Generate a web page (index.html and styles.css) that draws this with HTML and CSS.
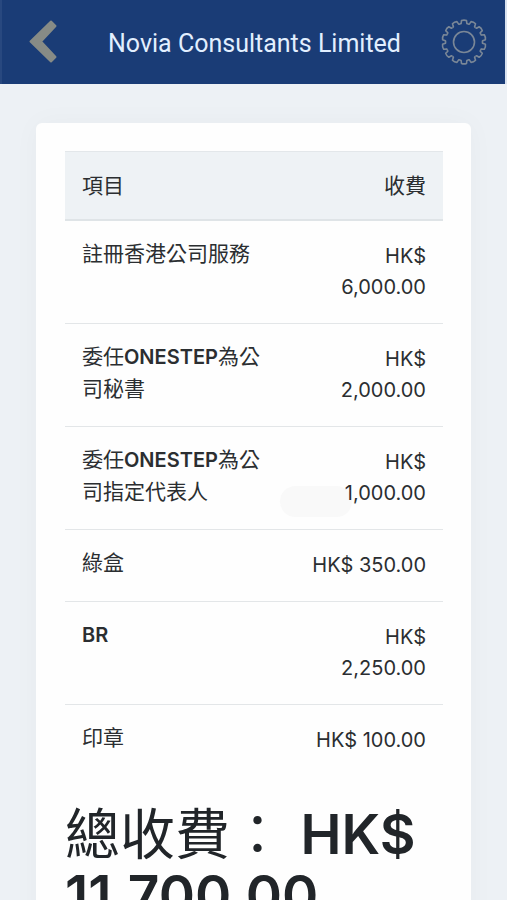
FILE: index.html
```html
<!DOCTYPE html>
<html lang="zh-Hant">
<head>
  <meta charset="utf-8">
  <meta name="viewport" content="width=device-width, initial-scale=1">
  <title>Novia Consultants Limited</title>
  <link rel="stylesheet" href="styles.css">
</head>
<body>
  <header class="topbar">
    <button class="icon-button" type="button" aria-label="返回">
      <svg width="46" height="46" viewBox="0 0 46 46" fill="#878b86" stroke="#878b86" stroke-width="2" stroke-linejoin="round">
        <path d="M8.500 22.500 L29 2.500 L33.500 7 L19 22.500 L33.500 38 L29 42.500 Z"/>
      </svg>
    </button>
    <h1 class="topbar-title">Novia Consultants Limited</h1>
    <button class="icon-button" type="button" aria-label="設定">
      <svg width="46" height="46" viewBox="-23 -23 46 46" fill="none" stroke="#7a8797" stroke-width="1.600" stroke-linejoin="round">
        <defs>
          <path id="tooth" d="M-4.100 -17.900 L-2.900 -18.400 L-2.500 -21.400 Q0 -22.400 2.500 -21.400 L2.900 -18.400 L4.100 -17.900"/>
        </defs>
        <use href="#tooth"/>
        <use href="#tooth" transform="rotate(25.714)"/>
        <use href="#tooth" transform="rotate(51.429)"/>
        <use href="#tooth" transform="rotate(77.143)"/>
        <use href="#tooth" transform="rotate(102.857)"/>
        <use href="#tooth" transform="rotate(128.571)"/>
        <use href="#tooth" transform="rotate(154.286)"/>
        <use href="#tooth" transform="rotate(180)"/>
        <use href="#tooth" transform="rotate(205.714)"/>
        <use href="#tooth" transform="rotate(231.429)"/>
        <use href="#tooth" transform="rotate(257.143)"/>
        <use href="#tooth" transform="rotate(282.857)"/>
        <use href="#tooth" transform="rotate(308.571)"/>
        <use href="#tooth" transform="rotate(334.286)"/>
        <circle r="10.500"/>
      </svg>
    </button>
  </header>
  <main class="page">
    <section class="card">
      <table class="fees">
        <thead>
          <tr><th class="item" scope="col">項目</th><th class="price" scope="col">收費</th></tr>
        </thead>
        <tbody>
          <tr><td class="item">註冊香港公司服務</td><td class="price">HK$ 6,000.00</td></tr>
          <tr><td class="item">委任<b>ONESTEP</b>為公司秘書</td><td class="price">HK$ 2,000.00</td></tr>
          <tr><td class="item">委任<b>ONESTEP</b>為公司指定代表人</td><td class="price marked"><span>HK$ 1,000.00</span></td></tr>
          <tr><td class="item">綠盒</td><td class="price">HK$ 350.00</td></tr>
          <tr><td class="item"><b>BR</b></td><td class="price">HK$ 2,250.00</td></tr>
          <tr><td class="item">印章</td><td class="price">HK$ 100.00</td></tr>
        </tbody>
      </table>
      <h2 class="total">總收費： <b>HK$ 11,700.00</b></h2>
    </section>
  </main>
</body>
</html>
```
FILE: styles.css
```css
* {
  box-sizing: border-box;
}

body {
  margin: 0;
  background: #edf1f5;
  color: #212529;
  font-family: Inter, "Noto Sans CJK TC", sans-serif;
  overflow-x: hidden;
}

.topbar {
  display: flex;
  align-items: center;
  justify-content: space-between;
  height: 84px;
  padding: 0 18px 0 20px;
  background: #1a3c76;
  border-left: 2px solid #28487f;
  border-right: 2px solid #d9e2ef;
}

.topbar-title {
  margin: 0;
  padding-top: 3px;
  color: #e2efff;
  font-family: Roboto, sans-serif;
  font-size: 25px;
  font-weight: 400;
  line-height: 32px;
}

.icon-button {
  display: flex;
  padding: 0;
  border: 0;
  background: none;
}

.page {
  height: calc(100vh - 84px);
  padding: 39px 36px 0;
  overflow: hidden;
}

.card {
  padding: 28px 28px 40px 29px;
  border-radius: 6px;
  background: #fefefe;
  box-shadow: 0 0 28px rgba(8, 21, 66, 0.03);
}

.fees {
  width: 100%;
  table-layout: fixed;
  border-collapse: separate;
  border-spacing: 0;
  color: #2b2e31;
  font-size: 21px;
  line-height: 31px;
}

.fees th {
  padding: 18px 17px;
  border-top: 1px solid #e3e7ea;
  border-bottom: 2px solid #dfe4e7;
  background: #eef2f5;
  font-weight: 400;
}

.fees td {
  padding: 20px 17px;
  border-bottom: 1px solid #e3e6e8;
  vertical-align: top;
}

.fees tr:last-child td {
  border-bottom: 0;
}

.fees .item {
  width: 58%;
  text-align: left;
}

.fees td.item {
  padding-top: 17px;
}

.fees .price {
  width: 42%;
  text-align: right;
}

.fees td.price {
  font-size: 20px;
}

.fees b {
  font-size: 20px;
  font-weight: 600;
}

.marked {
  position: relative;
}

.marked::before {
  content: "";
  position: absolute;
  left: -4px;
  bottom: 12px;
  width: 72px;
  height: 31px;
  border-radius: 16px;
  background: #f9f9f9;
}

.marked span {
  position: relative;
}

.total {
  margin: 28px 0 0;
  font-size: 55px;
  font-weight: 400;
  line-height: 61px;
}

.total b {
  font-weight: 600;
}
```
